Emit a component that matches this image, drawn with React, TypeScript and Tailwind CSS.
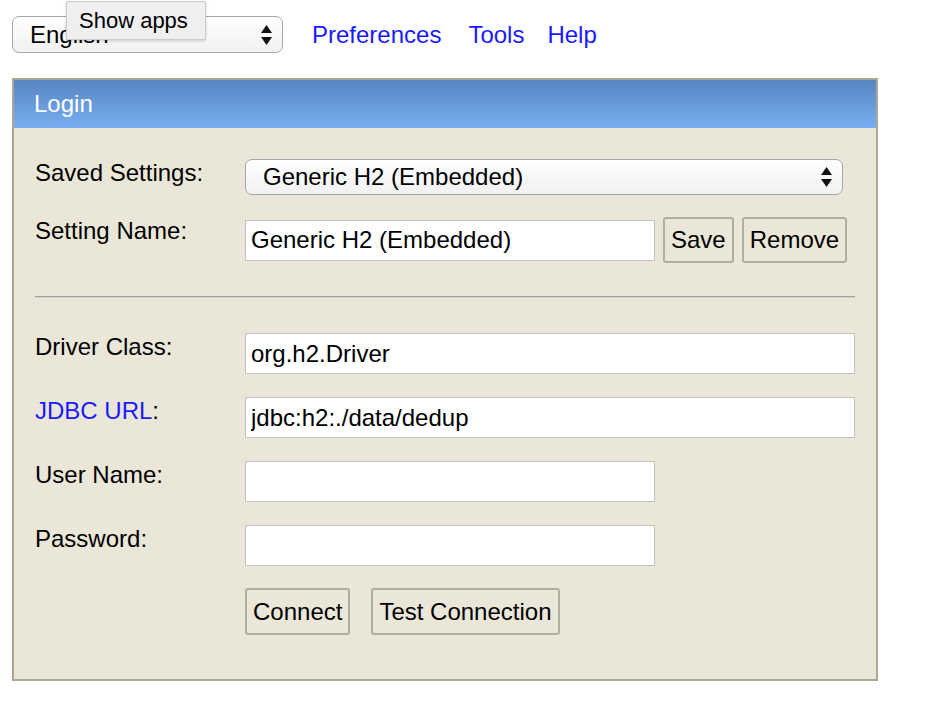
import type { ReactNode } from "react";

const Arrows = () => (
  <svg width="11" height="20" viewBox="0 0 11 20" className="shrink-0">
    <path d="M5.5 0 L11 8 L0 8 Z" fill="#111" />
    <path d="M0 12 L11 12 L5.5 20 Z" fill="#111" />
  </svg>
);

type FakeSelectProps = {
  value: string;
  className?: string;
};

const FakeSelect = ({ value, className = "" }: FakeSelectProps) => (
  <div
    className={`flex items-center justify-between rounded-[7px] border-[1.5px] border-[#a7a7a7] bg-gradient-to-b from-white to-[#f1f1f1] pr-[10px] ${className}`}
  >
    <span className="pl-[17px] leading-none">{value}</span>
    <Arrows />
  </div>
);

const Field = ({ wide, value = "" }: { wide?: boolean; value?: string }) => (
  <input
    defaultValue={value}
    className={`h-[41px] border border-[#c2c2c2] bg-white px-[5px] text-[24px] text-black outline-none ${
      wide ? "w-[610px]" : "w-[410px]"
    }`}
  />
);

const Btn = ({ children, tall }: { children: ReactNode; tall?: boolean }) => (
  <button
    className={`rounded-[3px] border-2 border-[#b1ad9f] bg-[#ebe7d8] px-[6px] text-[24px] leading-none text-black ${
      tall ? "h-[47px]" : "h-[46px]"
    }`}
  >
    {children}
  </button>
);

type RowProps = {
  label: ReactNode;
  children: ReactNode;
  className?: string;
};

const Row = ({ label, children, className = "" }: RowProps) => (
  <div className={`flex items-start ${className}`}>
    <div className="w-[210px] shrink-0 leading-[27px]">{label}</div>
    {children}
  </div>
);

const App = () => {
  return (
    <div className="min-h-[728px] bg-white pl-[12px] pt-[16px] font-['Liberation_Sans',Arial,sans-serif] text-[24px] text-black">
      {/* top bar */}
      <div className="relative flex items-center">
        <FakeSelect value="English" className="h-[37px] w-[271px]" />
        <a className="ml-[29px] text-[#1a1aff]">Preferences</a>
        <a className="ml-[27px] text-[#1a1aff]">Tools</a>
        <a className="ml-[23px] text-[#1a1aff]">Help</a>

        <div className="absolute left-[54px] top-[-15px] flex h-[39px] w-[140px] items-center rounded-[2px] border border-[#cbcbcb] bg-[#efefef] pl-[12px] text-[22px] shadow-[0_1px_3px_rgba(0,0,0,0.18)]">
          Show apps
        </div>
      </div>

      {/* login panel */}
      <div className="mt-[25px] w-[866px] border-2 border-[#aba797] bg-[#ebe7d8]">
        <div className="flex h-[48px] items-center bg-gradient-to-b from-[#5885c3] to-[#77aff1] pl-[20px] text-white">
          Login
        </div>

        <div className="pb-[44px] pl-[21px] pr-[21px] pt-[31px]">
          <Row label="Saved Settings:">
            <FakeSelect value="Generic H2 (Embedded)" className="h-[36px] w-[598px]" />
          </Row>

          <Row label="Setting Name:" className="mt-[22px]">
            <div className="flex items-center gap-[8px]">
              <Field value="Generic H2 (Embedded)" />
              <Btn>Save</Btn>
              <Btn>Remove</Btn>
            </div>
          </Row>

          <div className="mt-[33px] h-[2px] w-[820px] border-t border-[#9f9f9f] bg-[#d6d2c4]" />

          <Row label="Driver Class:" className="mt-[35px]">
            <Field wide value="org.h2.Driver" />
          </Row>

          <Row
            label={
              <>
                <a className="text-[#1a1aff]">JDBC URL</a>:
              </>
            }
            className="mt-[23px]"
          >
            <Field wide value="jdbc:h2:./data/dedup" />
          </Row>

          <Row label="User Name:" className="mt-[23px]">
            <Field />
          </Row>

          <Row label="Password:" className="mt-[23px]">
            <input
              type="password"
              className="h-[41px] w-[410px] border border-[#c2c2c2] bg-white px-[5px] outline-none"
            />
          </Row>

          <div className="ml-[210px] mt-[22px] flex gap-[21px]">
            <Btn tall>Connect</Btn>
            <Btn tall>Test Connection</Btn>
          </div>
        </div>
      </div>
    </div>
  );
};

export default App;
